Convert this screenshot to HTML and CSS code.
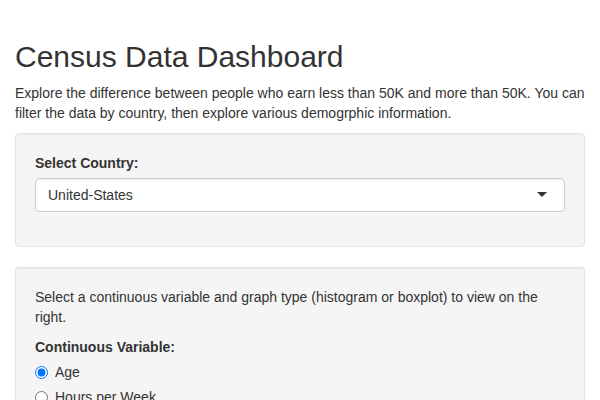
FILE: index.html
```html
<!DOCTYPE html>
<html lang="en">
<head>
<meta charset="utf-8">
<title>Census Data Dashboard</title>
<link rel="stylesheet" href="styles.css">
</head>
<body>
<div class="page">
  <h2 class="title">Census Data Dashboard</h2>
  <p class="intro">Explore the difference between people who earn less than 50K and more than 50K. You can filter the data by country, then explore various demogrphic information.</p>

  <div class="well">
    <div class="form-group">
      <label class="control-label">Select Country:</label>
      <div class="select">
        <span class="select-value">United-States</span>
        <span class="caret"></span>
      </div>
    </div>
  </div>

  <div class="well">
    <p class="help">Select a continuous variable and graph type (histogram or boxplot) to view on the right.</p>
    <div class="form-group">
      <label class="control-label">Continuous Variable:</label>
      <div class="options">
        <label class="radio"><input type="radio" name="cv" checked><span>Age</span></label>
        <label class="radio"><input type="radio" name="cv"><span>Hours per Week</span></label>
        <label class="radio"><input type="radio" name="cv"><span>Capital Gain</span></label>
        <label class="radio"><input type="radio" name="cv"><span>Capital Loss</span></label>
      </div>
    </div>
  </div>
</div>
</body>
</html>
```

FILE: styles.css
```css
html, body {
  margin: 0;
  padding: 0;
  background: #fff;
}

body {
  font-family: "Liberation Sans", Arial, Helvetica, sans-serif;
  font-size: 14px;
  line-height: 20px;
  color: #333;
}

.page {
  padding: 40px 15px 0;
}

.title {
  margin: 0 0 10px;
  font-size: 30px;
  font-weight: 400;
  line-height: 33px;
  color: #333;
}

.intro {
  margin: 0 0 10px;
}

.well {
  background: #f5f5f5;
  border: 1px solid #e3e3e3;
  border-radius: 4px;
  padding: 19px;
  margin-bottom: 20px;
  box-shadow: inset 0 1px 1px rgba(0, 0, 0, 0.05);
}

.help {
  margin: 0 0 10px;
}

.form-group {
  margin-bottom: 15px;
}

.control-label {
  display: block;
  font-weight: 700;
  margin-bottom: 5px;
}

.select {
  display: flex;
  align-items: center;
  justify-content: space-between;
  box-sizing: border-box;
  height: 34px;
  padding: 6px 17px 6px 12px;
  background: #fff;
  border: 1px solid #ccc;
  border-radius: 4px;
  box-shadow: inset 0 1px 1px rgba(0, 0, 0, 0.075);
}

.select-value {
  color: #333;
}

.caret {
  width: 0;
  height: 0;
  border-style: solid;
  border-width: 5px 5px 0;
  border-color: #333 transparent transparent;
  margin-top: -1px;
}

.options {
  display: flex;
  flex-direction: column;
  gap: 5px;
}

.radio {
  display: flex;
  align-items: center;
  font-weight: 400;
}

.radio input {
  width: 13px;
  height: 13px;
  margin: 1px 7px 0 0;
}
```
